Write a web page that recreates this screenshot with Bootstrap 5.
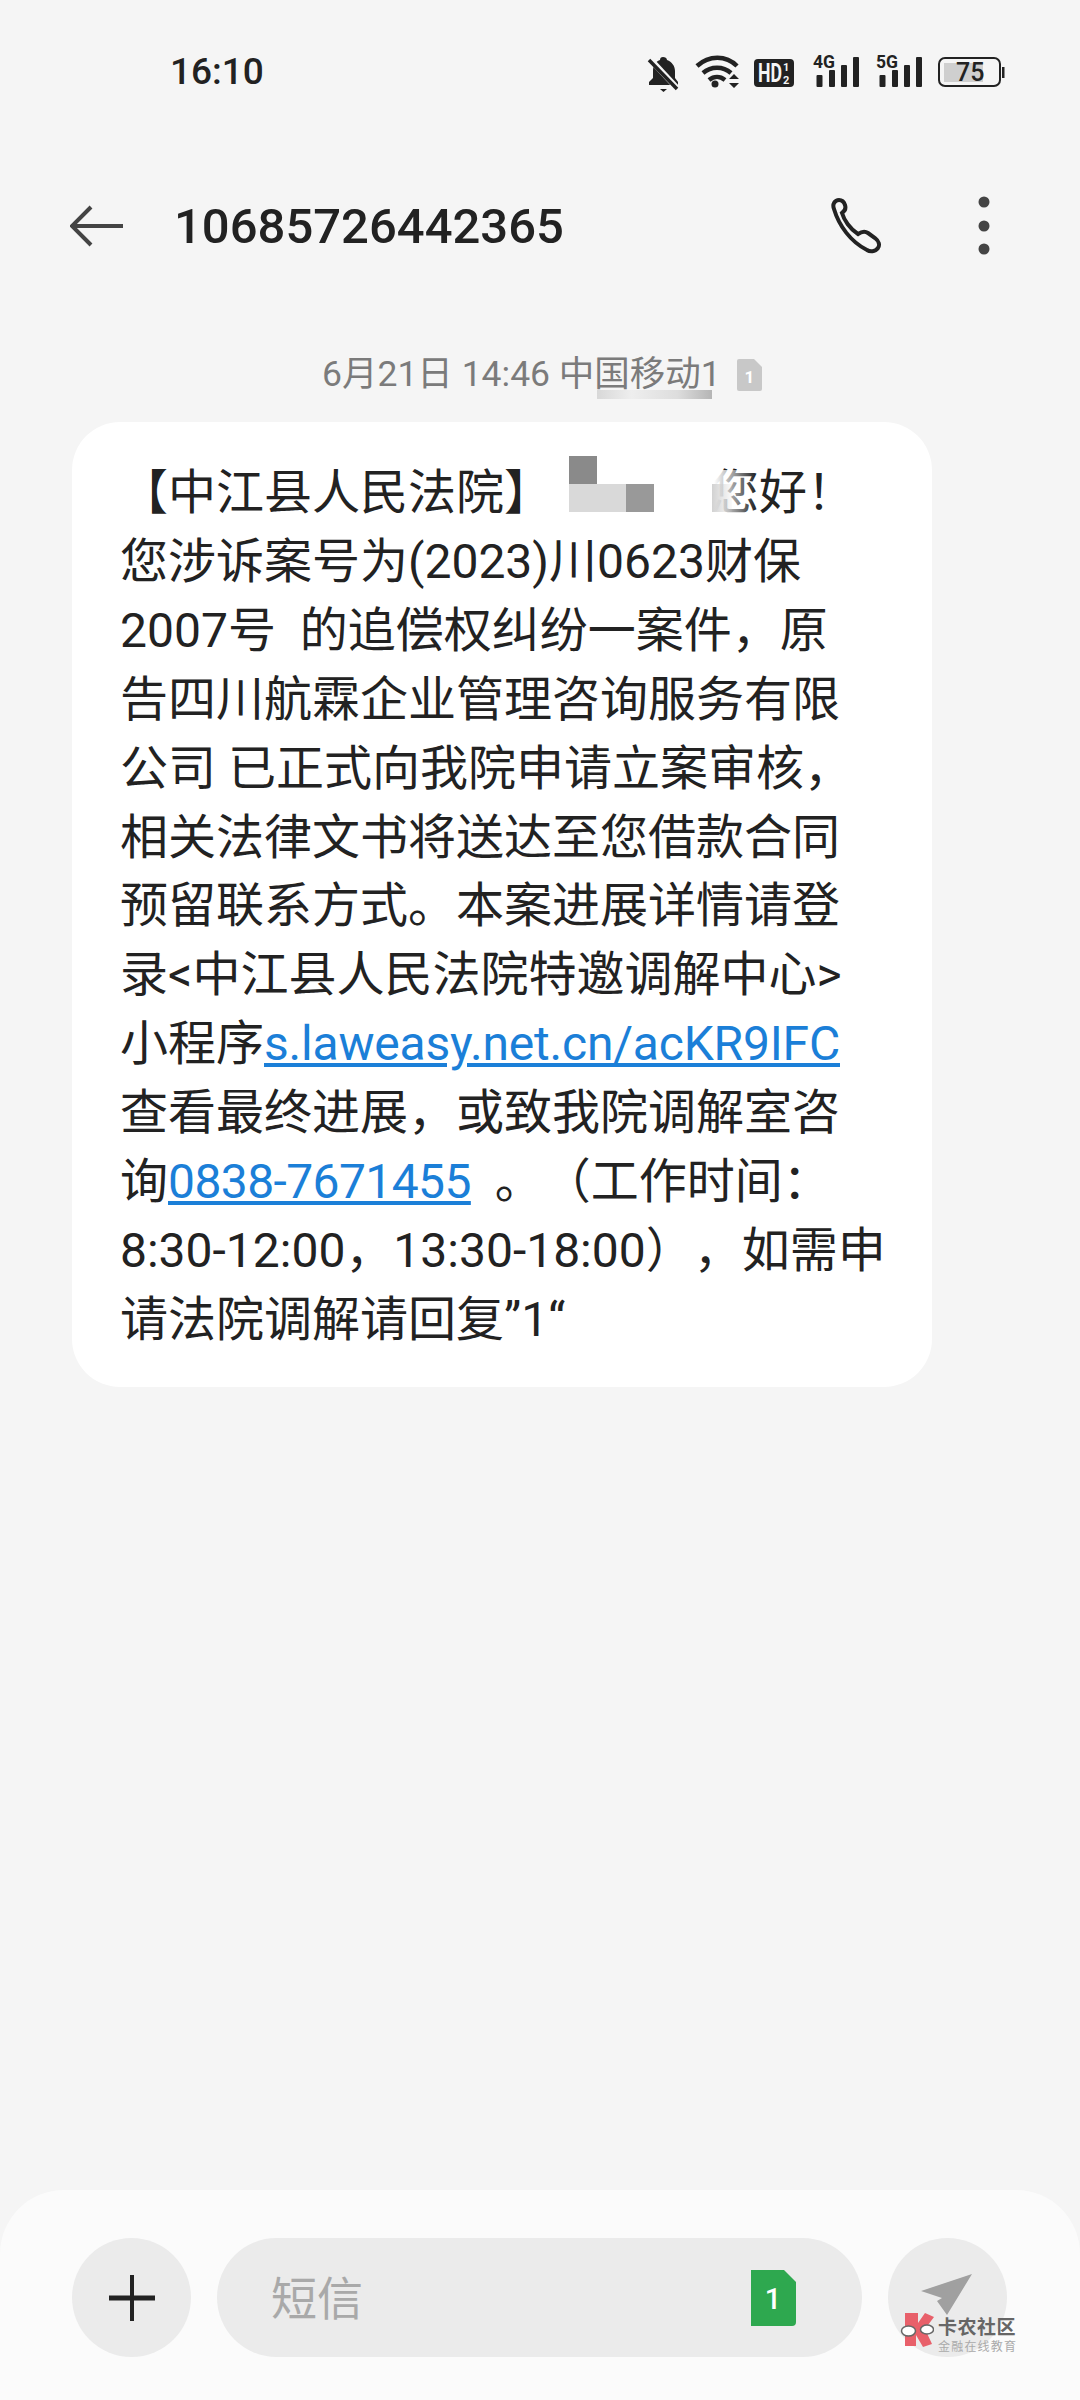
<!DOCTYPE html>
<html lang="zh-CN">
<head>
    <meta charset="UTF-8">
    <meta name="viewport" content="width=device-width, initial-scale=1.0">
    <title>短信</title>
    <link href="https://cdn.jsdelivr.net/npm/bootstrap@5.3.0/dist/css/bootstrap.min.css" rel="stylesheet">
    <style>
        body {
            background-color: #f5f5f5;
            color: #222;
            font-family: Roboto, "Noto Sans CJK SC", sans-serif;
            text-spacing-trim: space-all;
        }
        .sms-page {
            width: 1080px;
            height: 2400px;
            position: relative;
            overflow: hidden;
        }
        .status-bar {
            height: 144px;
            padding-left: 170px;
            font-size: 37px;
            font-weight: 500;
            position: relative;
        }
        .status-icons {
            position: absolute;
            left: 640px;
            top: 50px;
        }
        .sms-header {
            height: 164px;
            padding-left: 70px;
        }
        .sms-title {
            font-size: 49px;
            font-weight: 500;
            margin-left: 51px;
            line-height: 1;
        }
        .phone-icon {
            margin-right: 93px;
        }
        .more-icon {
            margin-right: 90px;
        }
        .sms-date {
            height: 50px;
            margin-top: 42px;
            margin-bottom: 22px;
            padding-left: 322px;
            font-size: 35.5px;
            color: #7b7b7b;
            position: relative;
        }
        .date-smudge {
            position: absolute;
            left: 597px;
            top: 40px;
            width: 115px;
            height: 9px;
            background: linear-gradient(90deg, #d8d8d8, #eee 30%, #ddd 70%, #b5b5b5);
        }
        .sim-small {
            width: 25px;
            height: 32px;
            margin-left: 16px;
        }
        .sms-bubble {
            width: 860px;
            margin-left: 72px;
            background: #fff;
            border-radius: 48px;
            padding: 37px 20px 32px 48px;
            font-size: 48px;
            line-height: 68.9px;
            white-space: nowrap;
            position: relative;
        }
        .sms-bubble a {
            color: #1b7fd8;
        }
        .link-url {
            letter-spacing: -.2px;
        }
        .link-tel {
            letter-spacing: -.6px;
        }
        .name-gap {
            display: inline-block;
            width: 159px;
        }
        .blur-block {
            position: absolute;
        }
        .blur-a { left: 497px; top: 34px; width: 28px; height: 28px; background: #8a8a8a; }
        .blur-b { left: 497px; top: 62px; width: 57px; height: 28px; background: #d9d9d9; }
        .blur-c { left: 554px; top: 62px; width: 28px; height: 28px; background: #999; }
        .blur-d { left: 640px; top: 48px; width: 44px; height: 46px; background: linear-gradient(90deg, #fff 5%, rgba(255, 255, 255, .5) 55%, rgba(255, 255, 255, 0)); }
        .blur-e { left: 640px; top: 62px; width: 20px; height: 28px; background: linear-gradient(90deg, rgba(205, 205, 205, .9), rgba(205, 205, 205, .1)); }
        .sms-footer {
            height: 210px;
            margin-top: auto;
            background: #fbfbfb;
            border-radius: 64px 64px 0 0;
            padding: 48px 73px 0 72px;
            gap: 26px;
        }
        .round-btn {
            width: 119px;
            height: 119px;
            border-radius: 50%;
            background: #ebebeb;
            flex-shrink: 0;
        }
        .sms-input {
            width: 646px;
            height: 119px;
            border-radius: 60px;
            background: #ebebeb;
            padding: 0 66px 0 54px;
            font-size: 46px;
            color: #a9a9a9;
        }
        .hint-text {
            padding-top: 4px;
        }
        .sim-green {
            width: 45px;
            height: 56px;
        }
        .water-mark {
            position: absolute;
            left: 900px;
            top: 2312px;
            gap: 4px;
            line-height: 1;
        }
        .water-main {
            font-size: 19px;
            font-weight: 700;
            color: #666;
            letter-spacing: .5px;
            margin-top: 6px;
        }
        .water-sub {
            font-size: 12px;
            color: #aaa;
            letter-spacing: 1.2px;
            margin-top: 4px;
        }
    </style>
</head>
<body class="m-0">
    <div class="sms-page d-flex flex-column">
        <!-- status bar -->
        <div class="status-bar d-flex align-items-center">
            16:10
            <svg class="status-icons" width="380" height="44" viewBox="640 50 380 44">
                <!-- bell -->
                <path d="M663 57c-2 0-3 1-3 3-5 2-7 6-7 11v7l-4 4v3h29v-3l-3-4v-7c0-5-3-9-8-11 0-2-2-3-4-3z" fill="#222"/>
                <path d="M660 89h7l-3.500 3z" fill="#222"/>
                <path d="M650 59l26 28" stroke="#f5f5f5" stroke-width="6"/>
                <path d="M649 60l28 29" stroke="#222" stroke-width="3.500"/>
                <!-- wifi -->
                <g fill="none" stroke="#222" stroke-width="4.500">
                    <path d="M697 66c12-11 29-11 40 0"/>
                    <path d="M703 73c8-7 20-7 28 0"/>
                    <path d="M709 80c5-4 11-4 16 0"/>
                </g>
                <circle cx="715" cy="84" r="3.500" fill="#222"/>
                <path d="M729 79l5-5 5 5zM729 83h10l-5 5z" fill="#222"/>
                <!-- hd -->
                <rect x="754" y="59" width="40" height="28" rx="4" fill="#222"/>
                <text transform="translate(758 82) scale(.68 1)" font-family="Roboto" font-size="26" font-weight="700" fill="#f5f5f5">HD</text>
                <text x="783" y="71" font-family="Roboto" font-size="11" font-weight="700" fill="#f5f5f5">1</text>
                <text x="783" y="84" font-family="Roboto" font-size="11" font-weight="700" fill="#f5f5f5">2</text>
                <!-- 4g -->
                <text x="813" y="68" font-family="Roboto" font-size="18" font-weight="700" fill="#222" textLength="22" lengthAdjust="spacingAndGlyphs">4G</text>
                <rect x="816.500" y="75" width="6" height="12" rx="1" fill="#222"/>
                <rect x="829" y="70" width="6" height="17" rx="1" fill="#222"/>
                <rect x="841" y="65" width="6" height="22" rx="1" fill="#222"/>
                <rect x="853" y="57" width="6" height="30" rx="1" fill="#222"/>
                <!-- 5g -->
                <text x="876" y="68" font-family="Roboto" font-size="18" font-weight="700" fill="#222" textLength="22" lengthAdjust="spacingAndGlyphs">5G</text>
                <rect x="879.500" y="75" width="6" height="12" rx="1" fill="#222"/>
                <rect x="892" y="70" width="6" height="17" rx="1" fill="#222"/>
                <rect x="904" y="65" width="6" height="22" rx="1" fill="#222"/>
                <rect x="916" y="57" width="6" height="30" rx="1" fill="#222"/>
                <!-- battery -->
                <rect x="939" y="58" width="61" height="28" rx="6" fill="none" stroke="#222" stroke-width="2"/>
                <rect x="944" y="63" width="39" height="19" fill="#cfcfcf"/>
                <rect x="1002" y="67" width="2.500" height="11" fill="#222"/>
                <text x="956" y="81" font-family="Roboto" font-size="25" fill="#222">75</text>
            </svg>
        </div>

        <!-- contact header -->
        <div class="sms-header d-flex align-items-center position-relative">
            <svg width="53" height="42" viewBox="0 0 53 42" fill="none" stroke="#444" stroke-width="4">
                <path d="M21 2L2 21l19 19M2 21h51"/>
            </svg>
            <div class="sms-title">10685726442365</div>
            <svg class="ms-auto phone-icon" width="54" height="56" viewBox="0 0 54 56" fill="none" stroke="#222" stroke-width="4">
                <path d="M3 11c-2-5 1-9 5-9 3 0 5 2 6 5 1 3 0 6-3 8 2 7 8 16 16 21 3-2 7-3 10-1l7 5c4 3 5 7 3 10-3 4-8 4-11 2C20 44 8 28 3 11z"/>
            </svg>
            <svg class="more-icon" width="12" height="60" viewBox="0 0 12 60" fill="#444">
                <circle cx="6" cy="6" r="5.500"/><circle cx="6" cy="30" r="5.500"/><circle cx="6" cy="53" r="5.500"/>
            </svg>
        </div>

        <!-- date row -->
        <div class="sms-date d-flex align-items-center">
            6月21日 14:46 中国移动1
            <svg class="sim-small" viewBox="0 0 25 32">
                <path d="M2 0h15l8 8v22a2 2 0 0 1-2 2H2a2 2 0 0 1-2-2V2a2 2 0 0 1 2-2z" fill="#c8c8c8"/>
                <text x="12.500" y="24" text-anchor="middle" font-family="Roboto" font-size="17" font-weight="700" fill="#fff">1</text>
            </svg>
            <div class="date-smudge"></div>
        </div>

        <!-- message -->
        <div class="sms-bubble">
            【中江县人民法院】<span class="name-gap"></span>您好！<br>
            您涉诉案号为(2023)川0623财保<br>
            2007号&nbsp; 的追偿权纠纷一案件，原<br>
            告四川航霖企业管理咨询服务有限<br>
            公司 已正式向我院申请立案审核，<br>
            相关法律文书将送达至您借款合同<br>
            预留联系方式。本案进展详情请登<br>
            录&lt;中江县人民法院特邀调解中心&gt;<br>
            小程序<a class="link-url" href="#">s.laweasy.net.cn/acKR9IFC</a><br>
            查看最终进展，或致我院调解室咨<br>
            询<a class="link-tel" href="#">0838-7671455</a>&nbsp; 。（工作时间：<br>
            8:30-12:00，13:30-18:00），如需申<br>
            请法院调解请回复”1“
            <div class="blur-block blur-a"></div>
            <div class="blur-block blur-b"></div>
            <div class="blur-block blur-c"></div>
            <div class="blur-block blur-d"></div>
            <div class="blur-block blur-e"></div>
        </div>

        <!-- input bar -->
        <div class="sms-footer d-flex">
            <div class="round-btn d-flex align-items-center justify-content-center">
                <svg width="46" height="46" viewBox="0 0 46 46" stroke="#222">
                    <path d="M23 0v46" stroke-width="4"/><path d="M0 23h46" stroke-width="5"/>
                </svg>
            </div>
            <div class="sms-input d-flex align-items-center justify-content-between">
                <span class="hint-text">短信</span>
                <svg class="sim-green" viewBox="0 0 45 56">
                    <path d="M0 0h33l12 12v40a4 4 0 0 1-4 4H0z" fill="#2ea84f"/>
                    <text x="22" y="39" text-anchor="middle" font-family="Roboto" font-size="29" font-weight="500" fill="#fff">1</text>
                </svg>
            </div>
            <div class="round-btn d-flex align-items-center justify-content-center">
                <svg width="119" height="119" viewBox="888 2238 119 119">
                    <path d="M972 2274l-51 17 21 7-5 3 10 14z" fill="#a0a0a0"/>
                </svg>
            </div>
        </div>

        <!-- forum watermark -->
        <div class="water-mark d-flex">
            <svg width="34" height="38" viewBox="0 0 34 38">
                <path d="M5 1h13v10l7-10 9 4-9 12 7 15-9 3-7-12v11H5z" fill="#e8606a"/>
                <ellipse cx="8.500" cy="19" rx="7" ry="5" fill="#fff" stroke="#666" stroke-width="1.500"/>
                <ellipse cx="27" cy="17.500" rx="6.500" ry="4.500" fill="#fff" stroke="#666" stroke-width="1.500"/>
            </svg>
            <div>
                <div class="water-main">卡农社区</div>
                <div class="water-sub">金融在线教育</div>
            </div>
        </div>
    </div>

    <script src="https://cdn.jsdelivr.net/npm/bootstrap@5.3.0/dist/js/bootstrap.bundle.min.js"></script>
</body>
</html>
